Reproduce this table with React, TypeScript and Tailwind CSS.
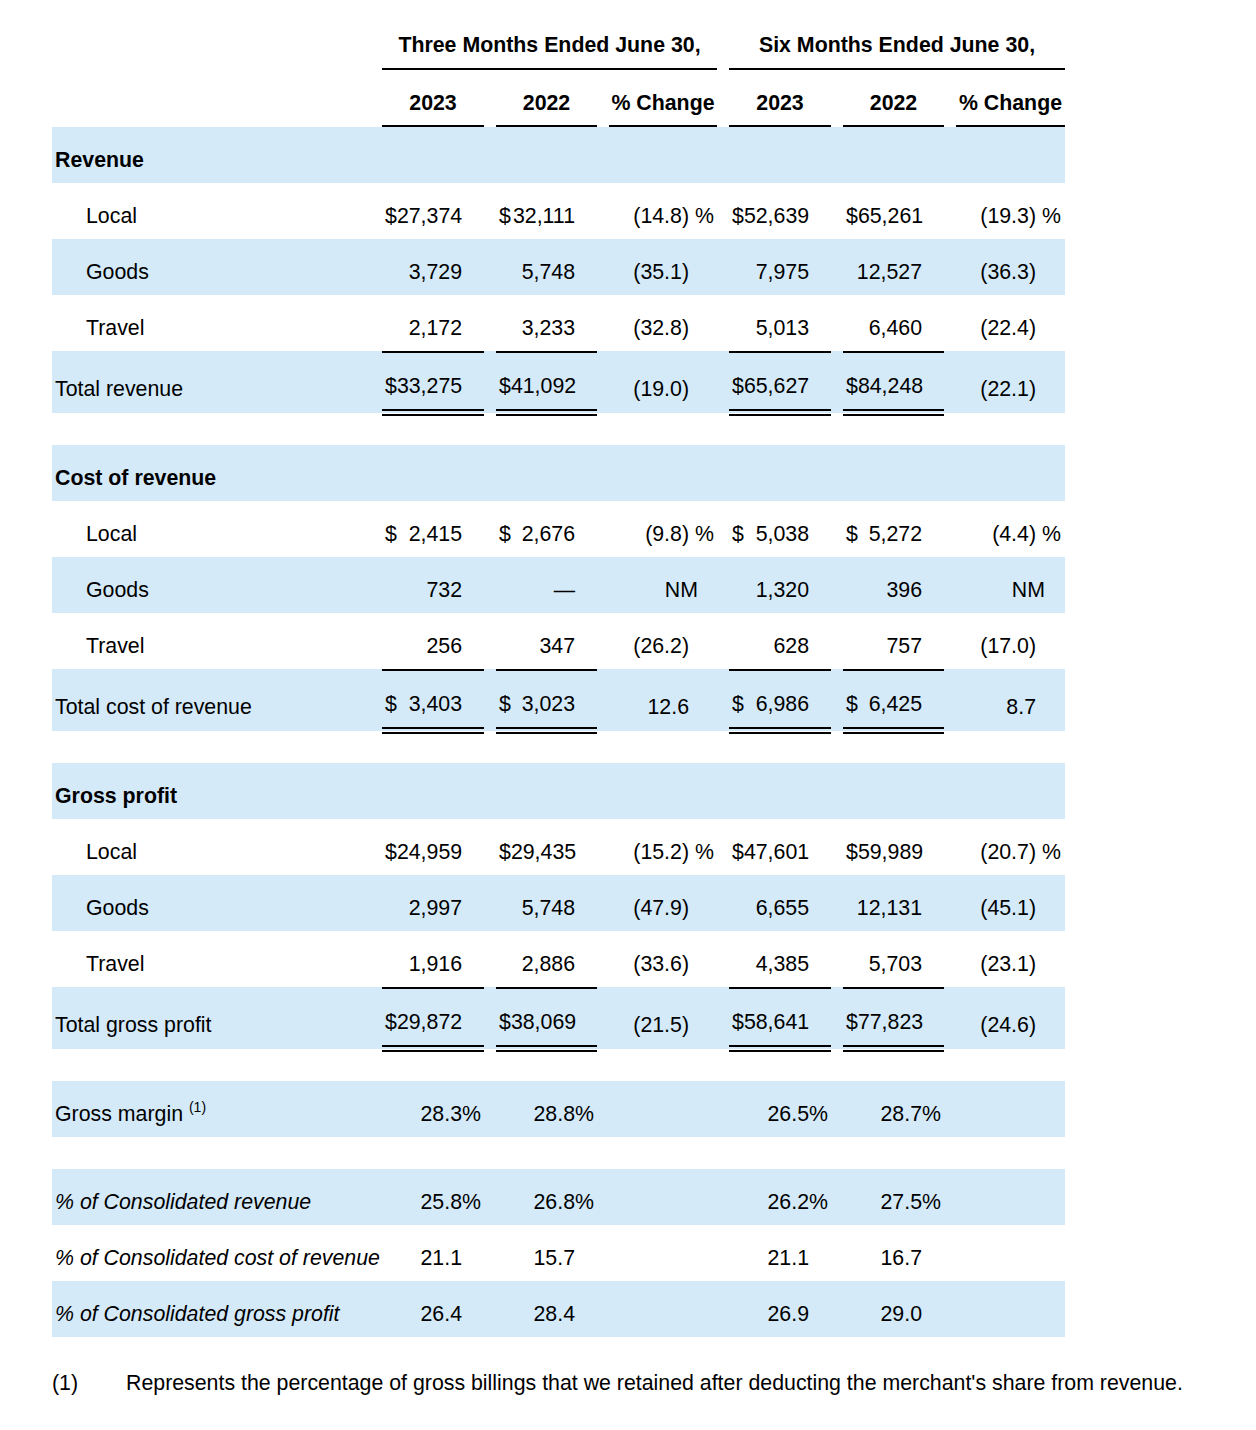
import React from "react";

type Cell = { v: string; d?: boolean; s?: string } | null;

type Row = {
  label: React.ReactNode;
  kind: "head" | "item" | "total" | "plain";
  blue?: boolean;
  italic?: boolean;
  cells?: Cell[];
};

const GRID = "grid grid-cols-[330px_114px_113px_120px_114px_113px_109px]";
const SUF = ["w-[22px]", "w-[22px]", "w-[28px]", "w-[22px]", "w-[22px]", "w-[29px]"];

const c = (v: string, d?: boolean, s?: string): Cell => ({ v, d, s });

const section = (title: string, totalLabel: string, rows: Cell[][]): Row[] => [
  { label: title, kind: "head", blue: true },
  { label: "Local", kind: "item", cells: rows[0] },
  { label: "Goods", kind: "item", blue: true, cells: rows[1] },
  { label: "Travel", kind: "item", cells: rows[2] },
  { label: totalLabel, kind: "total", blue: true, cells: rows[3] },
];

const revenue = section("Revenue", "Total revenue", [
  [c("27,374", true), c("32,111", true), c("(14.8)", false, " %"), c("52,639", true), c("65,261", true), c("(19.3)", false, " %")],
  [c("3,729"), c("5,748"), c("(35.1)"), c("7,975"), c("12,527"), c("(36.3)")],
  [c("2,172"), c("3,233"), c("(32.8)"), c("5,013"), c("6,460"), c("(22.4)")],
  [c("33,275", true), c("41,092", true), c("(19.0)"), c("65,627", true), c("84,248", true), c("(22.1)")],
]);

const cost = section("Cost of revenue", "Total cost of revenue", [
  [c("2,415", true), c("2,676", true), c("(9.8)", false, " %"), c("5,038", true), c("5,272", true), c("(4.4)", false, " %")],
  [c("732"), c("—"), c("NM"), c("1,320"), c("396"), c("NM")],
  [c("256"), c("347"), c("(26.2)"), c("628"), c("757"), c("(17.0)")],
  [c("3,403", true), c("3,023", true), c("12.6"), c("6,986", true), c("6,425", true), c("8.7")],
]);

const gross = section("Gross profit", "Total gross profit", [
  [c("24,959", true), c("29,435", true), c("(15.2)", false, " %"), c("47,601", true), c("59,989", true), c("(20.7)", false, " %")],
  [c("2,997"), c("5,748"), c("(47.9)"), c("6,655"), c("12,131"), c("(45.1)")],
  [c("1,916"), c("2,886"), c("(33.6)"), c("4,385"), c("5,703"), c("(23.1)")],
  [c("29,872", true), c("38,069", true), c("(21.5)"), c("58,641", true), c("77,823", true), c("(24.6)")],
]);

const margin: Row[] = [
  {
    label: (
      <>
        Gross margin <sup className="text-[14px] top-[-9px]">(1)</sup>
      </>
    ),
    kind: "plain",
    blue: true,
    cells: [c("28.3", false, "%"), c("28.8", false, "%"), null, c("26.5", false, "%"), c("28.7", false, "%"), null],
  },
];

const shares: Row[] = [
  { label: "% of Consolidated revenue", kind: "plain", blue: true, italic: true, cells: [c("25.8", false, "%"), c("26.8", false, "%"), null, c("26.2", false, "%"), c("27.5", false, "%"), null] },
  { label: "% of Consolidated cost of revenue", kind: "plain", italic: true, cells: [c("21.1"), c("15.7"), null, c("21.1"), c("16.7"), null] },
  { label: "% of Consolidated gross profit", kind: "plain", blue: true, italic: true, cells: [c("26.4"), c("28.4"), null, c("26.9"), c("29.0"), null] },
];

const Value = ({ cell, i }: { cell: Cell; i: number }) => {
  if (!cell) return null;
  const nm = cell.v === "NM";
  return (
    <div className="flex leading-[24px]">
      {cell.d && <span className="pl-[3px]">$</span>}
      <span className={`flex-1 text-right ${nm ? "-mr-[9px]" : ""}`}>{cell.v}</span>
      <span className={`${SUF[i]} shrink-0 whitespace-pre`}>{nm ? "" : cell.s}</span>
    </div>
  );
};

const NumCell = ({ cell, i, kind }: { cell: Cell; i: number; kind: Row["kind"] }) => {
  const pad = i < 5 ? "pr-[12px]" : "";
  const ruled = i !== 2 && i !== 5;
  if (kind === "total" && ruled) {
    return (
      <div className={pad}>
        <div className="flex h-[65px] flex-col border-t-2 border-black">
          <div className="flex-1 pt-[21px]">
            <Value cell={cell} i={i} />
          </div>
          <div className="h-[2px] shrink-0 bg-black" />
          <div className="h-[3px] shrink-0" />
          <div className="h-[2px] shrink-0 bg-black" />
        </div>
      </div>
    );
  }
  return (
    <div className={`${pad} ${kind === "total" ? "pt-[26px]" : "pt-[21px]"}`}>
      <Value cell={cell} i={i} />
    </div>
  );
};

const TableRow = ({ row }: { row: Row }) => {
  const h = row.kind === "total" ? "h-[62px]" : "h-[56px]";
  const pt = row.kind === "total" ? "pt-[26px]" : "pt-[21px]";
  const indent = row.kind === "item" ? "pl-[34px]" : "pl-[3px]";
  return (
    <div className={`${GRID} ${h} ${row.blue ? "bg-[#d4eaf9]" : ""}`}>
      <div
        className={`${pt} ${indent} whitespace-nowrap leading-[24px] ${row.kind === "head" ? "font-bold" : ""} ${row.italic ? "italic" : ""}`}
      >
        {row.label}
      </div>
      {row.cells?.map((cell, i) => (
        <NumCell key={i} cell={cell} i={i} kind={row.kind} />
      ))}
    </div>
  );
};

const Block = ({ rows }: { rows: Row[] }) => (
  <div>
    {rows.map((r, i) => (
      <TableRow key={i} row={r} />
    ))}
  </div>
);

const years = ["2023", "2022", "% Change", "2023", "2022", "% Change"];

export default function App() {
  return (
    <div className="h-[1430px] w-[1256px] bg-white font-['Liberation_Sans',Arial,sans-serif] text-[21.33px] text-black">
      <div className="w-[1065px] pl-[52px]">
        <div className={`${GRID} h-[70px]`}>
          <div />
          <div className="col-span-3 pr-[12px]">
            <div className="flex h-[70px] items-end justify-center border-b-2 border-black pb-[11px] font-bold leading-[24px]">
              Three Months Ended June 30,
            </div>
          </div>
          <div className="col-span-3">
            <div className="flex h-[70px] items-end justify-center border-b-2 border-black pb-[11px] font-bold leading-[24px]">
              Six Months Ended June 30,
            </div>
          </div>
        </div>
        <div className={`${GRID} h-[57px]`}>
          <div />
          {years.map((y, i) => (
            <div key={i} className={i < 5 ? "pr-[12px]" : ""}>
              <div className="flex h-[57px] items-end justify-center border-b-2 border-black pb-[10px] font-bold leading-[24px]">
                {y}
              </div>
            </div>
          ))}
        </div>

        <Block rows={revenue} />
        <div className="h-[32px]" />
        <Block rows={cost} />
        <div className="h-[32px]" />
        <Block rows={gross} />
        <div className="h-[32px]" />
        <Block rows={margin} />
        <div className="h-[32px]" />
        <Block rows={shares} />
      </div>

      <div className="mt-[34px] flex pl-[52px] leading-[24px]">
        <span className="w-[74px] shrink-0">(1)</span>
        <span>Represents the percentage of gross billings that we retained after deducting the merchant's share from revenue.</span>
      </div>
    </div>
  );
}
